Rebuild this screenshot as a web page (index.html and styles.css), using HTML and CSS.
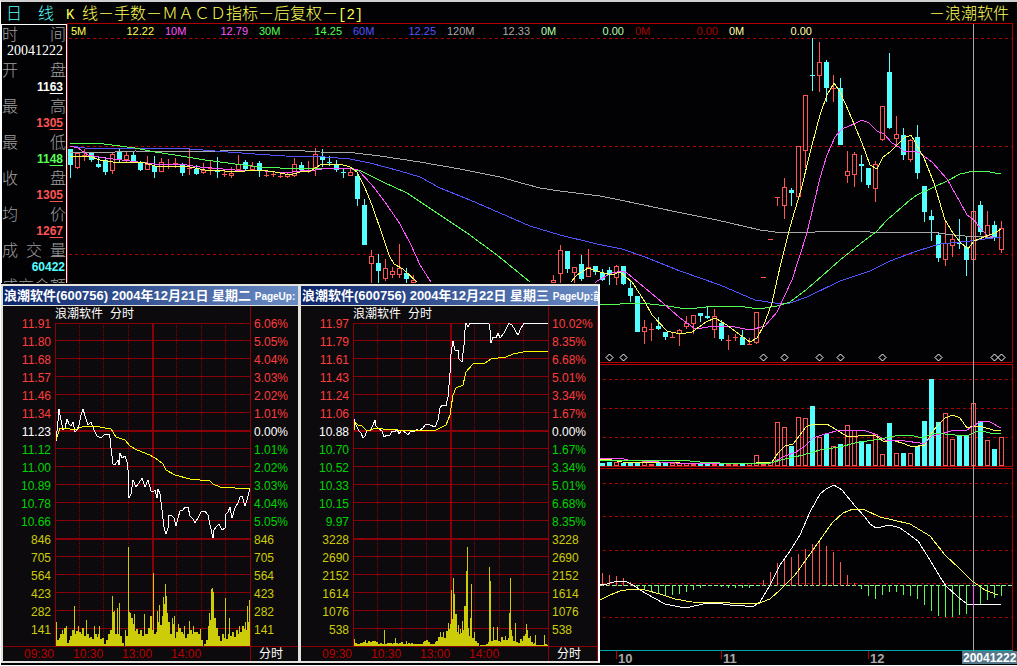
FILE: index.html
```html
<!DOCTYPE html>
<html lang="zh-CN">
<head>
<meta charset="utf-8">
<title>日线 K线－浪潮软件</title>
<link rel="stylesheet" href="styles.css">
</head>
<body>
<div class="app">
  <header class="topbar">
    <h1 class="title"><span class="period">日　线</span><span class="latin">K</span><span>线－手数－ＭＡＣＤ指标－后复权－<span class="latin">[2]</span></span></h1>
    <span class="stock">－浪潮软件</span>
  </header>
  <main class="workspace">
    <aside class="quote">
      <dl class="quote-list">
        <dt><span>时</span><span>间</span></dt><dd class="date">20041222</dd>
        <dt><span>开</span><span>盘</span></dt><dd class="white">11<u>63</u></dd>
        <dt><span>最</span><span>高</span></dt><dd class="red">13<u>05</u></dd>
        <dt><span>最</span><span>低</span></dt><dd class="green">11<u>48</u></dd>
        <dt><span>收</span><span>盘</span></dt><dd class="red">13<u>05</u></dd>
        <dt><span>均</span><span>价</span></dt><dd class="red">12<u>67</u></dd>
        <dt><span>成</span><span>交</span><span>量</span></dt><dd class="cyan">60422</dd>
        <dt><span>成</span><span>交</span><span>金</span><span>额</span></dt>
      </dl>
    </aside>
    <section class="board">
      <svg class="board-chart" id="board" viewBox="67 23 950 642" role="img" aria-label="日K线、成交量与MACD"></svg>
      <div class="legend">
        <div class="yellow"><span>5M</span><span>12.22</span></div>
        <div class="magenta"><span>10M</span><span>12.79</span></div>
        <div class="green"><span>30M</span><span>14.25</span></div>
        <div class="blue"><span>60M</span><span>12.25</span></div>
        <div class="gray"><span>120M</span><span>12.33</span></div>
        <div class="mint"><span>0M</span><span>0.00</span></div>
        <div class="darkred"><span>0M</span><span>0.00</span></div>
        <div class="cream"><span>0M</span><span>0.00</span></div>
      </div>
    </section>
  </main>
  <div class="windows">
    <section class="window">
      <h2 class="window-title">浪潮软件(600756) 2004年12月21日 星期二 <small>PageUp:</small></h2>
      <div class="window-body">
        <div class="scale scale-left">
          <span class="up">11.91</span><span class="up">11.80</span><span class="up">11.68</span><span class="up">11.57</span><span class="up">11.46</span><span class="up">11.34</span><span class="flat">11.23</span><span class="down">11.12</span><span class="down">11.00</span><span class="down">10.89</span><span class="down">10.78</span><span class="down">10.66</span><span class="vol">846</span><span class="vol">705</span><span class="vol">564</span><span class="vol">423</span><span class="vol">282</span><span class="vol">141</span>
        </div>
        <div class="caption"><span>浪潮软件</span><span>分时</span></div>
        <svg class="plot" id="day1" viewBox="55 322 195 324" role="img" aria-label="12月21日分时"></svg>
        <div class="scale scale-right">
          <span class="up">6.06%</span><span class="up">5.05%</span><span class="up">4.04%</span><span class="up">3.03%</span><span class="up">2.02%</span><span class="up">1.01%</span><span class="flat">0.00%</span><span class="down">1.01%</span><span class="down">2.02%</span><span class="down">3.03%</span><span class="down">4.04%</span><span class="down">5.05%</span><span class="vol">846</span><span class="vol">705</span><span class="vol">564</span><span class="vol">423</span><span class="vol">282</span><span class="vol">141</span>
        </div>
        <div class="times"><span>09:30</span><span>10:30</span><span>13:00</span><span>14:00</span></div>
        <div class="mode">分时</div>
      </div>
    </section>
    <section class="window window-last">
      <h2 class="window-title">浪潮软件(600756) 2004年12月22日 星期三 <small>PageUp:前</small></h2>
      <div class="window-body">
        <div class="scale scale-left">
          <span class="up">11.97</span><span class="up">11.79</span><span class="up">11.61</span><span class="up">11.43</span><span class="up">11.24</span><span class="up">11.06</span><span class="flat">10.88</span><span class="down">10.70</span><span class="down">10.52</span><span class="down">10.33</span><span class="down">10.15</span><span class="down">9.97</span><span class="vol">3228</span><span class="vol">2690</span><span class="vol">2152</span><span class="vol">1614</span><span class="vol">1076</span><span class="vol">538</span>
        </div>
        <div class="caption"><span>浪潮软件</span><span>分时</span></div>
        <svg class="plot" id="day2" viewBox="55 322 195 324" role="img" aria-label="12月22日分时"></svg>
        <div class="scale scale-right">
          <span class="up">10.02%</span><span class="up">8.35%</span><span class="up">6.68%</span><span class="up">5.01%</span><span class="up">3.34%</span><span class="up">1.67%</span><span class="flat">0.00%</span><span class="down">1.67%</span><span class="down">3.34%</span><span class="down">5.01%</span><span class="down">6.68%</span><span class="down">8.35%</span><span class="vol">3228</span><span class="vol">2690</span><span class="vol">2152</span><span class="vol">1614</span><span class="vol">1076</span><span class="vol">538</span>
        </div>
        <div class="times"><span>09:30</span><span>10:30</span><span>13:00</span><span>14:00</span></div>
        <div class="mode">分时</div>
      </div>
    </section>
  </div>
</div>
<script src="charts.js"></script>
</body>
</html>
```
FILE: styles.css
```css
* { box-sizing: border-box; }
body {
  margin: 0;
  background: #fff;
  color: #fff;
  font-family: "Liberation Sans", "Noto Sans CJK SC", sans-serif;
  font-size: 12px;
}
.app {
  position: relative;
  overflow: hidden;
  border-top: 2px solid #d0d0d0;
  border-left: 1px solid #fff;
  background: #020204;
}

.yellow { color: #ffff54; }
.magenta { color: #ff54ff; }
.green { color: #54ff54; }
.blue { color: #5454ff; }
.gray { color: #a8a8a8; }
.mint { color: #b4ffb4; }
.darkred { color: #a80000; }
.cream { color: #ffffa8; }
.red { color: #ff5454; }
.cyan { color: #54ffff; }
.white { color: #fff; }

.topbar {
  display: flex;
  justify-content: space-between;
  height: 21px;
  padding: 0 8px 0 5px;
  color: #ffff54;
  font-size: 16px;
  line-height: 20px;
  font-weight: 300;
  font-family: "Noto Sans CJK SC", sans-serif;
  white-space: nowrap;
}
.title { display: flex; align-items: baseline; margin: 0; font-size: 16px; font-weight: 300; }
.period { color: #54ffff; margin-right: 12px; }
.title .latin { font-family: "Liberation Mono", monospace; font-size: 14px; line-height: 16px; }
.title > .latin { width: 16px; }

.workspace {
  display: grid;
  grid-template-columns: 66px 1fr;
  align-items: start;
}
.quote {
  height: 260px;
  overflow: hidden;
  border: 1px solid #fff;
  margin-top: 1px;
}
.quote-list { margin: 0; }
.quote dt {
  display: flex;
  justify-content: space-between;
  height: 18px;
  color: #a0a0a0;
  font: 300 16px/16px "Noto Sans CJK SC", sans-serif;
}
.quote dd {
  height: 18px;
  margin: 0;
  padding-right: 3px;
  line-height: 16px;
  text-align: right;
  font-weight: bold;
}
.quote dd.date {
  font-family: "Liberation Serif", serif;
  font-size: 14px;
  font-weight: normal;
}
.quote dd.cyan { padding-right: 1px; }
.quote u { text-underline-offset: 2px; }

.board { display: grid; min-width: 0; }
.board-chart, .legend { grid-area: 1 / 1; }
.board-chart { display: block; width: 100%; height: auto; }
.axis-text { font-weight: bold; font-size: 13px; fill: #a8a8a8; }
.axis-date { font-weight: bold; font-size: 12px; fill: #fff; }
.legend {
  display: grid;
  grid-template-columns: repeat(8, 83px);
  column-gap: 11px;
  align-self: start;
  padding: 1px 0 0 4px;
  font-size: 11px;
  line-height: 15px;
}
.legend div { display: flex; justify-content: space-between; }

.windows {
  position: absolute;
  left: 0;
  top: 281px;
  display: flex;
  padding-top: 1px;
  background: #020204;
}
.window {
  width: 298px;
  border: solid #e4e2dc;
  border-width: 2px 1px 2px 2px;
  background: #0c0a0c;
}
.window-last { width: 301px; border-right: 2px solid #fff; }
.window-title {
  margin: 0;
  height: 20px;
  padding-left: 1px;
  overflow: hidden;
  white-space: nowrap;
  border-bottom: 1px solid #e4e2dc;
  background: linear-gradient(90deg, #0a246a, #6a8cc4);
  font-size: 13px;
  line-height: 19px;
}
.window-title small { font-size: 10px; }
.window-body {
  display: grid;
  grid-template-columns: 52px 195px 1fr;
  grid-template-rows: 16px auto 15px;
}
.scale {
  display: flex;
  flex-direction: column;
  grid-row: 1 / 3;
  padding-top: 9px;
  line-height: 18px;
}
.scale span { height: 18px; }
.scale-left { grid-column: 1; padding-right: 4px; text-align: right; }
.scale-right { grid-column: 3; padding-left: 3px; border-left: 1px solid #8b0008; }
.window-last .scale-right, .window-last .mode { border-right: 1px solid #8b0008; }
.up { color: #ff3c3c; }
.flat { color: #fff; }
.down { color: #00d400; }
.vol { color: #cccc08; }
.caption {
  display: flex;
  gap: 7px;
  grid-area: 1 / 2;
  line-height: 16px;
}
.plot { grid-area: 2 / 2; display: block; width: 100%; height: auto; }
.times, .mode { border-top: 1px solid #8b0008; line-height: 15px; }
.times {
  grid-area: 3 / 1 / 4 / 3;
  display: flex;
  gap: 19px;
  padding-left: 21px;
  color: #b80000;
}
.mode { grid-area: 3 / 3; padding-left: 8px; border-left: 1px solid #8b0008; }

.crisp { shape-rendering: crispEdges; }
```
FILE: charts.js
```js
const NS = 'http://www.w3.org/2000/svg';
const C = { y: '#ffff54', m: '#ff54ff', g: '#54ff54', b: '#5454ff', a: '#a8a8a8', r: '#ff5454', c: '#54ffff', w: '#fff', d: '#b00000' };

function add(svg, tag, attrs, text) {
  const el = document.createElementNS(NS, tag);
  for (const k in attrs) el.setAttribute(k, attrs[k]);
  if (text) el.textContent = text;
  svg.appendChild(el);
}
const box = (s, x, y, w, h, fill) => add(s, 'rect', { class: 'crisp', x, y, width: w, height: h, fill });
const outline = (s, x, y, w, h, stroke) => add(s, 'rect', { class: 'crisp', x: x + 0.5, y: y + 0.5, width: w - 1, height: h - 1, fill: 'none', stroke });
const curve = (s, pts, stroke) => add(s, 'polyline', { class: 'crisp', points: pts, fill: 'none', stroke });
const dashed = (s, x1, x2, y, stroke, dash) => add(s, 'line', { class: 'crisp', x1, x2, y1: y + 0.5, y2: y + 0.5, stroke, 'stroke-dasharray': dash });

const board = document.getElementById('board');
box(board, 67, 23, 950, 642, '#020204');

// Panel grid
[38, 146, 254].forEach(y => dashed(board, 69, 1012, y, C.d, '3 3'));
[379, 408, 437].forEach(y => dashed(board, 603, 1012, y, C.d, '3 3'));
[483, 516, 550, 583, 617].forEach(y => dashed(board, 603, 1012, y, C.d, '3 3'));
[23, 362, 364, 466, 468].forEach(y => box(board, 67, y, 946, 1, C.d));
box(board, 67, 23, 1, 640, C.d);
box(board, 1012, 23, 1, 340, C.d);
box(board, 1012, 364, 1, 103, C.d);
box(board, 1012, 468, 1, 183, C.d);

// Candles: x, colour, high, body top, body bottom, low
`70c149,149,165,178 77r153,153,168,169 84r149,155,156,161 91c152,153,160,162 98c156,164,167,168
105c157,160,172,175 112r152,154,171,174 119c149,151,160,162 126r152,155,160,163 133c152,155,161,163
140c161,163,170,171 147r156,164,170,170 154c156,166,172,178 161r158,162,172,172 168r159,164,165,169
175r158,163,164,168 182c163,164,173,176 189r149,168,169,175 196c165,169,174,175 203r163,170,173,174
210r161,168,169,175 217c157,171,172,178 224r170,174,175,177 231r167,173,176,178 238r155,164,170,172
245c160,162,169,170 252r162,166,170,171 259c161,163,170,177 266r172,175,176,177 273r171,174,175,177
280r172,176,177,178 287r173,174,177,178 294r158,164,176,177 301c162,165,170,172 308r161,171,172,173
315r148,154,168,176 322c149,157,160,167 329c156,162,163,166 336c160,165,170,172 343c169,172,173,178
350r168,172,176,176 357c172,176,199,206 364c199,205,245,245 371r250,256,264,283 378c254,263,271,283
385r259,268,279,281 392r267,271,275,278 399r244,268,275,278 406c268,273,279,283 413r275,280,283,283
553r275,280,283,283 560r245,250,274,283 567c251,251,269,273 574r267,267,273,283 581c255,264,279,281
588r249,267,277,277 595c266,266,272,275 602c269,273,280,281 609c267,270,275,285 616r265,266,278,285
623c266,266,284,285 630c280,288,296,302 637c296,296,332,332 644r320,327,332,344 651r323,329,330,341
658c317,326,329,330 665c332,332,337,340 672r333,337,338,338 679r329,330,334,346 686r316,323,327,329
693r315,315,324,334 700c313,313,316,322 707c307,316,318,319 714r309,316,330,338 721c320,323,339,341
728r335,340,341,350 735r334,337,338,341 742c330,337,345,345 749r338,344,345,345 756r312,312,343,344
763r277,277,278,278 770r239,239,240,240 777r197,197,198,206 784r178,187,206,219 791c188,190,193,206
798r146,146,197,197 805r95,95,151,168 812c38,75,76,91 819r42,62,76,92 826c60,62,88,102
833r75,88,89,102 840c78,88,145,145 847r151,171,176,183 854r152,154,175,187 861c155,164,166,182
868c168,168,185,188 875r161,164,189,202 882r106,106,140,141 889c53,72,128,129 896r116,134,139,147
903c128,135,155,160 910r139,140,160,162 917c125,137,173,179 924c186,186,212,222 931c210,216,220,241
938c232,235,258,262 945r221,243,260,266 952r235,239,246,257 959c219,243,244,249 966c237,247,260,276
973r211,211,260,265 980c201,205,232,235 987r211,225,236,237 994c221,225,237,241 1001r221,228,250,253`
  .trim().split(/\s+/).forEach(t => {
    const m = t.match(/^(\d+)([rc])(.*)/), x = +m[1], col = C[m[2]];
    const [hi, top, bot, lo] = m[3].split(',').map(Number);
    if (top > hi) box(board, x, hi, 1, top - hi, col);
    if (lo > bot) box(board, x, bot, 1, lo - bot, col);
    if (m[2] === 'r' && bot - top > 2) outline(board, x - 2, top, 5, bot - top, col);
    else box(board, x - 2, top, 5, bot - top, col);
  });

// Moving averages
curve(board, '70,152 85,152 115,152 135,151 170,152 220,151 245,150 290,150 320,152 355,153 380,156 420,162 460,169 500,177 525,184 540,188 560,191 600,196 620,200 677,212 717,220 760,230 775,232 800,233 830,231 845,231 870,232 930,232 945,234 965,236 985,237 1001,238', C.a);
curve(board, '70,146 85,148 105,148 190,149 215,151 255,154 285,156 325,157 350,159 370,163 400,171 420,177 440,188 470,200 500,213 530,226 560,235 597,244 622,249 645,257 680,271 720,285 755,300 775,303 790,303 807,297 840,281 870,271 890,261 917,251 940,244 970,241 1001,237', C.b);
curve(board, '70,143 95,143 112,145 135,148 155,152 175,155 205,160 235,164 260,167 280,168 330,168 352,169 361,171 383,182 407,193 437,213 467,233 497,255 530,282', C.g);
curve(board, '600,304 620,304 632,303 650,304 668,306 680,308 697,308 715,306 738,306 752,308 765,308 777,306 790,302 807,289 822,276 840,260 860,244 876,232 887,220 910,200 917,195 932,188 947,181 960,174 974,171 984,171 1001,174', C.g);
curve(board, '70,146 78,148 88,155 105,158 130,161 155,164 180,164 200,167 235,170 255,170 285,173 300,171 315,170 330,168 350,168 358,170 372,185 385,202 400,224 411,245 420,265 431,282', C.m);
curve(board, '595,283 597,281 612,273 622,271 627,273 645,288 663,303 680,318 694,328 702,328 715,326 735,327 750,330 765,326 777,312 792,280 807,233 810,220 820,178 827,155 835,137 842,129 854,124 862,120 869,123 877,131 884,134 892,143 899,147 904,152 914,151 920,153 932,162 947,179 960,202 967,215 974,220 980,228 987,235 993,237', C.m);
curve(board, '70,156 89,156 100,160 120,163 135,162 145,163 155,166 175,166 190,167 205,170 225,171 245,171 260,170 275,172 290,175 300,172 310,171 322,164 340,164 350,167 357,172 365,188 372,205 383,237 389,255 394,264 403,269 417,282', C.y);
curve(board, '571,282 577,275 588,268 600,272 612,275 620,272 632,282 645,302 652,315 667,331 680,334 692,332 706,322 715,318 727,325 740,335 750,342 757,338 763,327 772,303 780,267 788,235 792,220 801,190 812,145 820,115 827,95 834,83 840,92 849,112 862,143 870,165 877,169 883,157 890,152 904,138 911,135 924,158 934,183 945,220 953,233 960,242 968,249 974,241 989,235 995,233 1001,229', C.y);

// Event markers
[609, 623, 763, 784, 819, 840, 882, 938, 994, 1001].forEach(x =>
  add(board, 'path', { d: `M${x + 0.5} 354l3.5 3.5l-3.5 3.5l-3.5-3.5z`, fill: 'none', stroke: C.w }));

// Volume: x advances by 7 from 602
'c463 c462 r462 c463 c463 c463 r461 r464 c463 c463 r463 r463 r463 r464 c463 c463 r464 c463 r464 r464 c463 r463 r455 r464 r462 r422 r427 c446 r417 r418 c406 r437 c434 r446 c444 r425 r430 c441 c444 r434 r454 c423 r453 c453 r453 c446 c421 c379 c422 r413 r439 c435 c435 r403 c421 r440 c449 r437'
  .split(' ').forEach((t, i) => {
    const x = 600 + i * 7, y = +t.slice(1);
    (t[0] === 'r' ? outline : box)(board, x, y, 5, 466 - y, C[t[0]]);
  });
curve(board, '600,459 607,459 622,462 680,463 740,464 772,462 778,453 785,446 793,444 800,435 806,427 813,424 820,425 827,424 835,429 848,437 858,436 875,435 884,442 892,440 905,444 912,447 925,445 931,434 937,426 945,418 953,415 960,418 967,428 973,426 983,427 993,430 1001,430', C.y);
curve(board, '600,458 620,458 628,460 675,463 730,464 772,463 785,456 796,452 805,446 813,438 825,434 840,430 863,430 875,434 885,440 905,441 920,443 925,443 932,436 940,434 955,430 965,431 972,427 981,421 990,422 1001,428', C.m);
curve(board, '600,460 680,460 700,462 720,463 770,463 785,459 803,455 820,450 840,447 855,443 880,439 895,436 910,435 922,438 935,433 945,434 955,435 967,436 975,432 982,431 990,433 1001,434', C.g);

// MACD histogram around y = 585
dashed(board, 600, 1012, 585, '#8cff8c', '4 2');
'573 575 576 578 582 588 590 592 594 595 595 594 592 590 588 585 585 587 588 588 588 588 585 580 572 563 559 557 554 549 544 541 546 552 562 575 583 589 596 599 595 592 592 595 596 599 605 611 616 617 617 615 614 585 604 600 598 596'
  .split(' ').forEach((v, i) => {
    const x = 602 + i * 7;
    if (v < 585) box(board, x, +v, 1, 586 - v, C.r);
    else if (v > 585) box(board, x, 585, 1, v - 585, C.g);
  });
curve(board, '600,585 607,584 617,581 625,581 633,585 645,593 665,604 680,607 690,607 703,604 715,603 730,605 745,606 754,606 760,602 770,585 780,565 790,551 800,535 810,512 820,494 826,489 834,485 842,490 855,506 865,517 870,524 876,528 890,525 900,528 910,535 918,541 930,560 940,577 946,586 958,597 967,604 990,604 1001,605', C.w);
curve(board, '600,600 610,595 620,591 632,589 645,590 660,594 675,599 692,602 730,603 757,604 770,599 780,590 795,575 808,557 820,540 832,523 843,513 853,509 865,510 880,517 910,524 930,536 945,555 960,569 972,581 985,590 998,595', C.y);

// Date axis
box(board, 600, 650, 413, 1, '#00a8a8');
[[616, '10'], [721, '11'], [868, '12']].forEach(([x, t]) => {
  box(board, x, 651, 1, 8, C.d);
  add(board, 'text', { class: 'axis-text', x: x + 2, y: 663 }, t);
});
box(board, 973, 24, 1, 627, C.a);
box(board, 973, 586, 1, 21, C.m);
box(board, 962, 651, 55, 13, '#54788a');
add(board, 'text', { class: 'axis-date', x: 963, y: 662 }, '20041222');

// Intraday windows
function intraday(id, bars, price, average) {
  const s = document.getElementById(id), grid = '#8b0008';
  for (let i = 0; i < 18; i++) {
    const heavy = i === 6 || i === 12;
    box(s, 55, i ? 322 + i * 18 : 323, 195, heavy ? 2 : 1, grid);
  }
  [79, 103, 128, 176, 201, 225].forEach(x => add(s, 'line', { class: 'crisp', x1: x + 0.5, x2: x + 0.5, y1: 323, y2: 646, stroke: grid, 'stroke-dasharray': '1 1' }));
  box(s, 55, 323, 1, 323, grid);
  box(s, 152, 323, 2, 323, grid);
  bars.split(' ').forEach(b => {
    const [x, h, w] = b.split(':').map(Number);
    box(s, x, 646 - h, w || 2, h, '#cccc08');
  });
  curve(s, price, '#fff');
  curve(s, average, '#ffff00');
}

intraday('day1',
  '56:24:1 57:6 59:8 60:12 62:16:1 63:12 64:18 66:20:1 67:3 69:6 70:10 72:16 74:12 74:40:1 76:15 78:20:1 79:14 81:12 82:18 84:10 86:26:1 87:12 89:8 90:9 92:7 94:20:1 95:12 97:9 98:12 99:20:1 100:7 102:8 104:2 106:6 108:12 110:16 112:34 112:50:1 114:35:1 115:12 117:38:1 118:12 119:43:1 120:10 122:3 125:16:1 126:10 128:34 128:99:1 130:33:1 131:28 133:22 134:32:1 135:15 136:17 138:12 140:16 142:10 144:32:1 145:12 147:12 148:18 150:30 152:16 153:73:1 154:12 156:14 157:35:1 158:24 159:41:1 160:21 162:30 163:49:1 164:42 165:62:1 166:50:1 167:33:1 168:24 170:12 172:28:1 173:22 174:30:1 175:8 176:14 178:22:1 179:18 181:14 182:12 184:20:1 185:8 187:12 189:25:1 190:16 192:12 193:20:1 194:14 196:14 198:12 200:17:1 201:6 204:2 206:6 208:20 209:33:1 210:26 211:57:1 212:58:1 213:54:1 214:28 216:18 218:10 220:5 222:12 224:8 225:48:1 226:7 228:12 229:28:1 230:10 232:14 234:9 236:16 238:12 239:20:1 240:14 242:20 244:17 245:24:1 246:16 247:40:1 248:24 249:46:1',
  '56,441 58,421 59,409 61,420 63,430 65,428 67,419 69,424 71,426 73,422 75,432 77,430 79,425 81,415 83,409 85,416 88,425 91,422 94,430 97,436 101,438 105,434 109,434 110,438 111,448 113,464 115,465 118,460 119,465 120,453 122,458 125,456 127,462 128,470 129,498 131,494 133,480 136,487 139,483 142,478 145,487 148,480 151,491 153,492 155,490 157,498 158,489 160,494 162,510 164,527 166,534 168,528 169,515 172,516 174,518 176,526 178,518 180,511 183,510 185,507 188,507 190,516 193,519 195,523 198,518 201,512 205,511 208,515 210,525 213,538 214,530 217,526 219,524 222,530 225,528 226,514 228,512 230,507 232,518 235,508 238,503 240,497 242,496 245,506 247,500 250,488',
  '56,440 60,428 66,428 74,430 82,427 95,426 105,428 111,429 116,437 125,440 130,446 137,450 150,455 158,460 163,464 166,470 175,475 190,479 210,481 213,484 220,487 235,488 250,489');

intraday('day2',
  '56:7:1 57:3 59:2 60:2 62:3 63:3 65:4 67:6:1 68:3 70:5 72:4 74:5 76:5 78:4 80:2 82:3 84:2 86:16:1 87:2 89:3 90:3 92:3 94:2 95:3 97:8:1 98:3 100:2 101:3 103:4 105:2 106:2 108:5:1 109:2 110:3 112:2 113:3 115:2 116:2 118:2 119:2 121:2 123:2 125:4 126:5 128:6 130:4 132:2 134:2 135:2 137:4 138:5 140:9 142:14:1 143:9 145:14:1 146:8 148:15 150:23:1 151:17 152:22 153:56:1 154:27:1 155:68:1 156:52:1 157:32 159:14 160:21:1 161:12 162:17:1 163:13 164:25:1 165:16 166:40 168:75:1 169:99:1 170:18:1 171:10 172:28:1 173:62:1 174:8 176:14:1 177:5 179:3 182:1 184:1 186:1 188:2 190:4 191:79:1 192:65:1 193:5 195:19:1 196:6 198:6 199:19:1 200:5 202:4 203:9 205:6 207:10:1 208:6 210:8 211:33:1 212:68:1 213:16:1 214:10:1 215:5 217:23:1 218:4 220:3 222:7 224:5 225:10 227:12 228:22:1 229:16:1 230:8 232:10:1 233:4 235:2 236:3:1 237:11:1 238:1 240:1 242:1 244:1 246:11:1 247:2 249:1:1',
  '56,419 58,425 61,431 63,433 65,438 67,436 69,430 72,431 75,425 77,420 78,426 81,429 84,431 86,437 89,435 92,435 94,431 97,432 99,429 101,434 104,430 108,433 110,435 113,431 116,432 119,429 121,431 125,428 128,424 132,425 137,427 140,420 142,408 144,405 148,406 150,397 152,373 153,354 155,341 157,350 160,350 161,359 164,362 166,345 167,330 168,323.5 170,327 172,323.5 191,323.5 192,330 193,343 195,337 198,338 200,333 202,338 206,333 209,327 211,323.5 214,325 217,330 220,335 223,328 226,323.5 250,323.5',
  '56,430 57,422 60,425 64,426 68,430 72,430 78,428 85,429 100,430 110,431 138,430 148,425 152,415 155,395 158,388 165,385 168,372 175,364 187,363 193,359 208,357 215,354 225,352 235,351 250,351');
```
